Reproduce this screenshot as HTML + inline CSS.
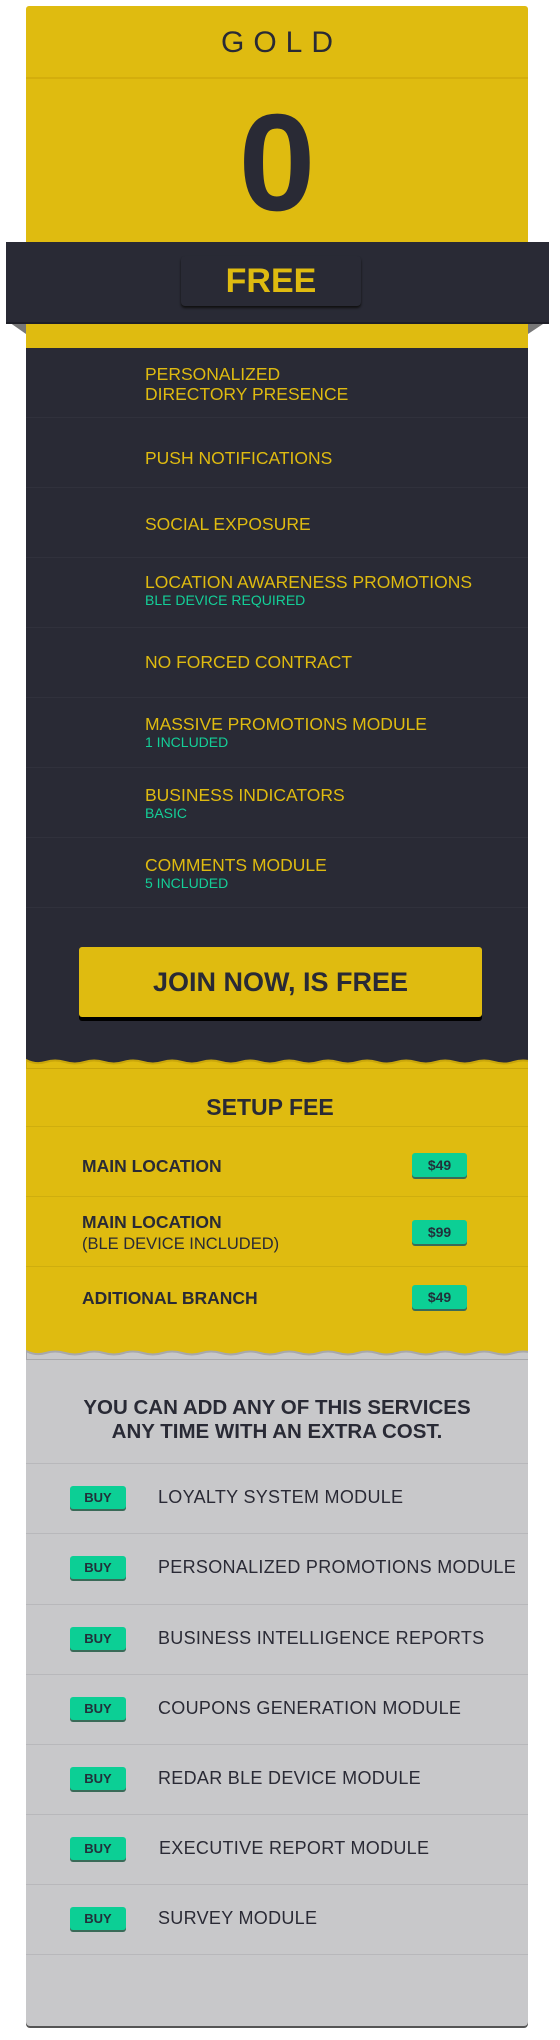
<!DOCTYPE html>
<html><head><meta charset="utf-8"><style>
*{margin:0;padding:0;box-sizing:border-box}
body{width:560px;height:2040px;background:#fff;position:relative;font-family:"Liberation Sans",sans-serif;overflow:hidden}
.a{position:absolute}
.card{position:absolute;left:26px;width:502px}
.f{position:absolute;left:145px;color:#dfbb10;font-size:17.5px;line-height:20px}
.f small{display:block;color:#14cf98;font-size:14px;line-height:16px}
.sep{position:absolute;left:26px;width:502px;height:1px}
.badge{position:absolute;background:#0ccf95;border-radius:3px;box-shadow:0 2px 0 #3a6a58;color:#22303a;font-weight:bold;text-align:center}
.sr{position:absolute;left:82px;color:#292a35;font-weight:bold;font-size:17.5px;line-height:21px}
.bl{position:absolute;left:158px;color:#2a2a35;font-size:18px;letter-spacing:.3px;line-height:20px}
.bb{left:70px;width:56px;height:23px;line-height:23px;font-size:13px}
</style></head><body>
<div class="card" style="top:6px;height:342px;background:#dfbb10;border-radius:3px 3px 0 0"></div>
<div class="a" style="left:26px;top:77px;width:502px;height:2px;background:#d4ae0c"></div>
<div class="a" style="left:26px;top:26px;width:502px;text-align:center;font-size:30px;letter-spacing:9px;color:#292a35;padding-left:9px">GOLD</div>
<div class="a" style="left:26px;top:88px;width:502px;text-align:center;font-size:138px;font-weight:bold;color:#292a35;line-height:150px">0</div>
<svg class="a" style="left:6px;top:320px" width="543" height="16"><polygon points="0,0 20,0 20,14" fill="#777"/><polygon points="543,0 522,0 522,14" fill="#777"/></svg>
<div class="a" style="left:6px;top:242px;width:543px;height:80px;background:#292a35;box-shadow:0 2px 0 #1e1f28"></div>
<div class="a" style="left:181px;top:256px;width:180px;height:50px;background:#292a35;border-radius:4px;box-shadow:0 2px 2px #111;color:#dfbb10;font-weight:bold;font-size:34px;text-align:center;line-height:50px">FREE</div>
<div class="card" style="top:348px;height:720px;background:#292a35"></div>
<div class="sep" style="top:417px;background:#30313c"></div>
<div class="sep" style="top:487px;background:#30313c"></div>
<div class="sep" style="top:557px;background:#30313c"></div>
<div class="sep" style="top:627px;background:#30313c"></div>
<div class="sep" style="top:697px;background:#30313c"></div>
<div class="sep" style="top:767px;background:#30313c"></div>
<div class="sep" style="top:837px;background:#30313c"></div>
<div class="sep" style="top:907px;background:#30313c"></div>
<div class="f" style="top:364px">PERSONALIZED<br>DIRECTORY PRESENCE</div>
<div class="f" style="top:448px">PUSH NOTIFICATIONS</div>
<div class="f" style="top:514px">SOCIAL EXPOSURE</div>
<div class="f" style="top:572px">LOCATION AWARENESS PROMOTIONS<small>BLE DEVICE REQUIRED</small></div>
<div class="f" style="top:652px">NO FORCED CONTRACT</div>
<div class="f" style="top:714px">MASSIVE PROMOTIONS MODULE<small>1 INCLUDED</small></div>
<div class="f" style="top:785px">BUSINESS INDICATORS<small>BASIC</small></div>
<div class="f" style="top:855px">COMMENTS MODULE<small>5 INCLUDED</small></div>
<div class="a" style="left:79px;top:947px;width:403px;height:70px;background:#dfbb10;border-radius:3px;box-shadow:0 4px 0 #000;text-align:center;line-height:70px;font-weight:bold;font-size:27px;color:#292a35">JOIN NOW, IS FREE</div>
<div class="card" style="top:1066px;height:294px;background:#dfbb10"></div>
<svg class="a" style="left:26px;top:1055px" width="502" height="14"><path d="M0,5 Q10,10 19.5,7 T39,7 T58.5,7 T78,7 T97.5,7 T117,7 T136.5,7 T156,7 T175.5,7 T195,7 T214.5,7 T234,7 T253.5,7 T273,7 T292.5,7 T312,7 T331.5,7 T351,7 T370.5,7 T390,7 T409.5,7 T429,7 T448.5,7 T468,7 T487.5,7 T507,7 L507,14 L0,14Z" fill="#dfbb10" stroke="#c9a60b" stroke-width="2"/></svg>
<div class="a" style="left:26px;top:1094px;width:502px;text-align:center;font-weight:bold;font-size:23px;color:#292a35;padding-right:14px">SETUP FEE</div>
<div class="sep" style="top:1126px;background:#cfae0e"></div>
<div class="sep" style="top:1196px;background:#cfae0e"></div>
<div class="sep" style="top:1266px;background:#cfae0e"></div>
<div class="sr" style="top:1156px">MAIN LOCATION</div>
<div class="sr" style="top:1212px">MAIN LOCATION<br><span style="font-weight:normal;font-size:16.5px">(BLE DEVICE INCLUDED)</span></div>
<div class="sr" style="top:1288px">ADITIONAL BRANCH</div>
<div class="badge" style="left:412px;top:1153px;width:55px;height:24px;line-height:24px;font-size:14px">$49</div>
<div class="badge" style="left:412px;top:1220px;width:55px;height:24px;line-height:24px;font-size:14px">$99</div>
<div class="badge" style="left:412px;top:1285px;width:55px;height:24px;line-height:24px;font-size:14px">$49</div>
<div class="card" style="top:1356px;height:670px;background:#c8c8ca;border-radius:0 0 4px 4px;box-shadow:0 2px 0 #555"></div>
<svg class="a" style="left:26px;top:1346px" width="502" height="14"><path d="M0,5 Q10,10 19.5,7 T39,7 T58.5,7 T78,7 T97.5,7 T117,7 T136.5,7 T156,7 T175.5,7 T195,7 T214.5,7 T234,7 T253.5,7 T273,7 T292.5,7 T312,7 T331.5,7 T351,7 T370.5,7 T390,7 T409.5,7 T429,7 T448.5,7 T468,7 T487.5,7 T507,7 L507,14 L0,14Z" fill="#c8c8ca" stroke="#a8a8ab" stroke-width="2"/></svg>
<div class="a" style="left:26px;top:1396px;width:502px;text-align:center;font-weight:bold;font-size:20.5px;line-height:24px;color:#292a35">YOU CAN ADD ANY OF THIS SERVICES<br>ANY TIME WITH AN EXTRA COST.</div>
<div class="sep" style="top:1463px;background:#b8b8bb"></div>
<div class="sep" style="top:1533px;background:#b8b8bb"></div>
<div class="sep" style="top:1604px;background:#b8b8bb"></div>
<div class="sep" style="top:1674px;background:#b8b8bb"></div>
<div class="sep" style="top:1744px;background:#b8b8bb"></div>
<div class="sep" style="top:1814px;background:#b8b8bb"></div>
<div class="sep" style="top:1884px;background:#b8b8bb"></div>
<div class="sep" style="top:1954px;background:#b8b8bb"></div>
<div class="badge bb" style="top:1486px">BUY</div>
<div class="bl" style="top:1487px">LOYALTY SYSTEM MODULE</div>
<div class="badge bb" style="top:1556px">BUY</div>
<div class="bl" style="top:1557px">PERSONALIZED PROMOTIONS MODULE</div>
<div class="badge bb" style="top:1627px">BUY</div>
<div class="bl" style="top:1628px">BUSINESS INTELLIGENCE REPORTS</div>
<div class="badge bb" style="top:1697px">BUY</div>
<div class="bl" style="top:1698px">COUPONS GENERATION MODULE</div>
<div class="badge bb" style="top:1767px">BUY</div>
<div class="bl" style="top:1768px">REDAR BLE DEVICE MODULE</div>
<div class="badge bb" style="top:1837px">BUY</div>
<div class="bl" style="top:1838px;left:159px">EXECUTIVE REPORT MODULE</div>
<div class="badge bb" style="top:1907px">BUY</div>
<div class="bl" style="top:1908px">SURVEY MODULE</div>
</body></html>
